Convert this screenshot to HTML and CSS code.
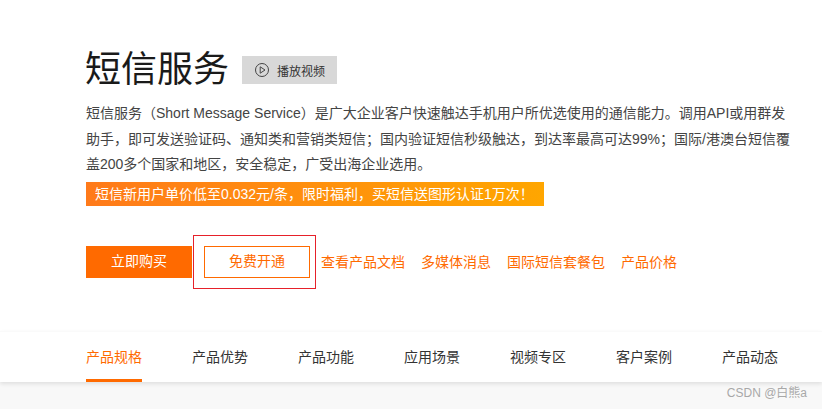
FILE: index.html
```html
<!DOCTYPE html>
<html lang="zh-CN">
<head>
    <meta charset="UTF-8">
    <title>短信服务</title>
    <link rel="stylesheet" href="styles.css">
</head>
<body>
    <div class="hero">
        <div class="title-row">
            <h1>短信服务</h1>
            <a class="video-btn">
                <svg class="play-icon" width="16" height="16" viewBox="0 0 16 16">
                    <circle cx="8" cy="8" r="6.5" fill="none" stroke="#444" stroke-width="1"/>
                    <path d="M6.2 4.8 L11 8 L6.2 11.2 Z" fill="none" stroke="#444" stroke-width="1"/>
                </svg>
                播放视频
            </a>
        </div>
        <p class="desc">短信服务（Short Message Service）是广大企业客户快速触达手机用户所优选使用的通信能力。调用API或用群发<br>助手，即可发送验证码、通知类和营销类短信；国内验证短信秒级触达，到达率最高可达99%；国际/港澳台短信覆<br>盖200多个国家和地区，安全稳定，广受出海企业选用。</p>
        <div class="promo">短信新用户单价低至0.032元/条，限时福利，买短信送图形认证1万次！</div>
        <div class="actions">
            <a class="btn btn-buy">立即购买</a>
            <a class="btn btn-free">免费开通<span class="red-box"></span></a>
            <a class="link link-first">查看产品文档</a>
            <a class="link">多媒体消息</a>
            <a class="link">国际短信套餐包</a>
            <a class="link">产品价格</a>
        </div>
    </div>

    <div class="tabs">
        <a class="tab active">产品规格</a>
        <a class="tab">产品优势</a>
        <a class="tab">产品功能</a>
        <a class="tab">应用场景</a>
        <a class="tab">视频专区</a>
        <a class="tab">客户案例</a>
        <a class="tab">产品动态</a>
    </div>
    <div class="page-rest"></div>

    <div class="watermark">CSDN @白熊a</div>
</body>
</html>
```

FILE: styles.css
```css
* {
    box-sizing: border-box;
}

html, body {
    height: 100%;
}

body {
    margin: 0;
    width: 822px;
    height: 409px;
    overflow: hidden;
    position: relative;
    background: #fff;
    font-family: "Liberation Sans", "Noto Sans CJK SC", sans-serif;
    color: #333;
}

.hero {
    height: 331px;
    padding: 43px 0 0 85px;
}

.title-row {
    display: flex;
    align-items: center;
    height: 54px;
}

h1 {
    margin: 0;
    font-size: 36px;
    line-height: 54px;
    font-weight: 400;
    color: #1a1a1a;
}

.video-btn {
    display: flex;
    align-items: center;
    margin-left: 13px;
    width: 95px;
    height: 28px;
    padding-left: 12px;
    background: #d8d8d8;
    font-size: 12px;
    color: #333;
}

.play-icon {
    margin-right: 7px;
}

.desc {
    margin: 4px 0 0 1px;
    width: 720px;
    font-size: 14px;
    line-height: 25.5px;
    color: #444;
}

.promo {
    margin: 4px 0 0 1px;
    width: 458px;
    height: 24px;
    padding-left: 9px;
    background: linear-gradient(90deg, #ff7a1a, #ffa600);
    color: #fff;
    font-size: 14px;
    line-height: 24px;
}

.actions {
    display: flex;
    align-items: center;
    margin: 40px 0 0 1px;
    height: 32px;
}

.btn {
    width: 106px;
    height: 32px;
    font-size: 14px;
    line-height: 31px;
    text-align: center;
}

.btn-buy {
    background: #ff6a00;
    color: #fff;
}

.btn-free {
    position: relative;
    margin-left: 12px;
    border: 1px solid #ff6a00;
    line-height: 29px;
    color: #ff6a00;
}

/* red annotation drawn over the screenshot */
.red-box {
    position: absolute;
    left: -12px;
    top: -12px;
    width: 123px;
    height: 54px;
    border: 1px solid #e6212a;
}

.link {
    margin-left: 16px;
    padding-bottom: 2px;
    font-size: 14px;
    color: #ff6a00;
}

.link-first {
    margin-left: 11px;
}

.tabs {
    display: flex;
    gap: 50px;
    height: 51px;
    padding-left: 86px;
    border-top: 1px solid #fafafa;
    background: #fff;
    box-shadow: 0 2px 4px rgba(0, 0, 0, 0.1);
    position: relative;
}

.tab {
    width: 56px;
    height: 50px;
    font-size: 14px;
    line-height: 50px;
    color: #333;
    white-space: nowrap;
}

.tab.active {
    color: #ff6a00;
    border-bottom: 3px solid #ff6a00;
}

.page-rest {
    height: 27px;
    background: #f8f8f8;
}

.watermark {
    position: absolute;
    right: 15px;
    top: 386px;
    font-size: 12px;
    line-height: 15px;
    color: #a8a8a8;
}
```
